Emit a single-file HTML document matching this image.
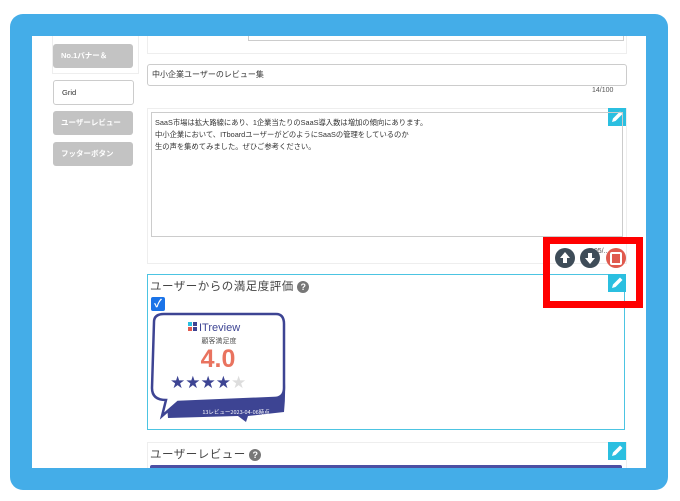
<!DOCTYPE html>
<html><head><meta charset="utf-8"><style>
body{margin:0;width:680px;height:501px;background:#fff;position:relative;overflow:hidden;font-family:"Liberation Sans","Noto Sans CJK JP",sans-serif;color:#333}
.a{position:absolute}
.btn{position:absolute;left:53px;width:80px;height:24px;background:#c3c3c3;border-radius:3px;color:#fff;font-size:7.5px;font-weight:bold;line-height:24px;text-indent:8px}
.pen{position:absolute;width:18px;height:18px;background:#2bbfe0}
.circ{position:absolute;width:20px;height:20px;border-radius:50%;background:#3e4c58}
.tt{font-size:11.5px;color:#444;letter-spacing:0.5px}
</style></head><body>
<div class="a" style="left:10px;top:14px;width:658px;height:476px;background:#44ade8;border-radius:13px"></div>
<div class="a" style="left:32px;top:36px;width:614px;height:432px;background:#fff;overflow:hidden">
 <div class="a" style="left:20px;top:-10px;width:85px;height:46px;border:1px solid #eee;background:#fff"></div>
 <div class="btn" style="left:21px;top:8px">No.1バナー＆</div>
 <div class="btn" style="left:21px;top:44px;background:#fff;border:1px solid #ccc;color:#333;font-weight:normal;height:23px;width:79px">Grid</div>
 <div class="btn" style="left:21px;top:75px">ユーザーレビュー</div>
 <div class="btn" style="left:21px;top:106px">フッターボタン</div>
 <div class="a" style="left:115px;top:-10px;width:478px;height:26px;border:1px solid #eee"></div>
 <div class="a" style="left:216px;top:-10px;width:374px;height:13px;border:1px solid #ccc"></div>
 <div class="a" style="left:115px;top:28px;width:474px;height:20px;border:1px solid #ccc;border-radius:3px;font-size:8px;line-height:20px;padding-left:4px">中小企業ユーザーのレビュー集</div>
 <div class="a" style="left:560px;top:51px;font-size:7px;color:#555">14/100</div>
 <div class="a" style="left:115px;top:72px;width:478px;height:154px;border:1px solid #eee"></div>
 <svg class="pen" style="left:576px;top:72px" viewBox="0 0 18 18"><path d="M4 14 L5 10.5 L12 3.5 L14.5 6 L7.5 13 Z" fill="#fff"/></svg>
 <div class="a" style="left:119px;top:76px;border:1px solid #ccc;font-size:7.3px;line-height:12px;padding:4px 3px;box-sizing:border-box;width:472px;height:125px">SaaS市場は拡大路線にあり、1企業当たりのSaaS導入数は増加の傾向にあります。<br>中小企業において、ITboardユーザーがどのようにSaaSの管理をしているのか<br>生の声を集めてみました。ぜひご参考ください。</div>
 <div class="a" style="left:558px;top:212px;font-size:7px;color:#555">105/...</div>
 <svg class="a" style="left:523px;top:212px" width="20" height="20" viewBox="0 0 20 20"><circle cx="10" cy="10" r="10" fill="#3e4c58"/><path d="M10 4 L15 10 L12 10 L12 15 L8 15 L8 10 L5 10 Z" fill="#fff"/></svg>
 <svg class="a" style="left:548px;top:212px" width="20" height="20" viewBox="0 0 20 20"><circle cx="10" cy="10" r="10" fill="#3e4c58"/><path d="M10 16 L15 10 L12 10 L12 5 L8 5 L8 10 L5 10 Z" fill="#fff"/></svg>
 <div class="circ" style="left:574px;top:212px;background:#e05a4e"></div>
 <div class="a" style="left:578px;top:216px;width:8px;height:9px;border:2px solid #fff;border-radius:2px"></div>
 <div class="a" style="left:115px;top:238px;width:476px;height:154px;border:1px solid #4cc4e2"></div>
 <svg class="pen" style="left:576px;top:238px" viewBox="0 0 18 18"><path d="M4 14 L5 10.5 L12 3.5 L14.5 6 L7.5 13 Z" fill="#fff"/></svg>
 <div class="a tt" style="left:118px;top:242px">ユーザーからの満足度評価 <span style="display:inline-block;width:12px;height:12px;border-radius:50%;background:#777;color:#fff;font-size:9px;font-weight:bold;text-align:center;line-height:12px">?</span></div>
 <div class="a" style="left:119px;top:261px;width:14px;height:14px;background:#1a73e8;border-radius:2px;color:#fff;font-size:11px;font-weight:bold;text-align:center;line-height:14px">✓</div>
 <svg class="a" style="left:116px;top:276px" width="142" height="112" viewBox="0 0 142 112">
  <path d="M14 32 L130 30 Q140 60 136 100 L100 104 L98 110 L90 104 L20 106 Z" fill="#3d4493"/>
  <path d="M6 10 Q6 2 16 2 L128 2 Q136 2 136 12 L136 76 Q136 86 126 86 L30 90 L14 104 L18 88 Q4 88 4 76 Z" fill="#fff" stroke="#3d4493" stroke-width="2.5"/>
  <rect x="40" y="10" width="4" height="4" fill="#2bbfe0"/><rect x="45" y="10" width="4" height="4" fill="#3d4493"/><rect x="40" y="15" width="4" height="4" fill="#e05a4e"/><rect x="45" y="15" width="4" height="4" fill="#3d4493"/>
  <text x="51" y="19" font-size="11" fill="#3d4493" font-family="Liberation Sans">ITreview</text>
  <text x="71" y="31" font-size="7" fill="#555" text-anchor="middle" font-family="Noto Sans CJK JP">顧客満足度</text>
  <text x="70" y="55" font-size="25" font-weight="bold" fill="#e9735f" text-anchor="middle" font-family="Liberation Sans">4.0</text>
  <text x="22" y="76" font-size="17" fill="#3d4493" font-family="DejaVu Sans">★★★★<tspan fill="#ddd">★</tspan></text>
  <text x="88" y="102" font-size="5.5" fill="#fff" text-anchor="middle" font-family="Noto Sans CJK JP">13レビュー2023-04-06時点</text>
 </svg>
 <div class="a" style="left:115px;top:406px;width:478px;height:40px;border:1px solid #eee"></div>
 <svg class="pen" style="left:576px;top:406px" viewBox="0 0 18 18"><path d="M4 14 L5 10.5 L12 3.5 L14.5 6 L7.5 13 Z" fill="#fff"/></svg>
 <div class="a tt" style="left:118px;top:410px">ユーザーレビュー <span style="display:inline-block;width:12px;height:12px;border-radius:50%;background:#777;color:#fff;font-size:9px;font-weight:bold;text-align:center;line-height:12px">?</span></div>
 <div class="a" style="left:118px;top:429px;width:472px;height:6px;background:#4c4fa3;border-radius:2px"></div>
</div>
<div class="a" style="left:543px;top:237px;width:86px;height:57px;border:7px solid #f00"></div>
</body></html>
